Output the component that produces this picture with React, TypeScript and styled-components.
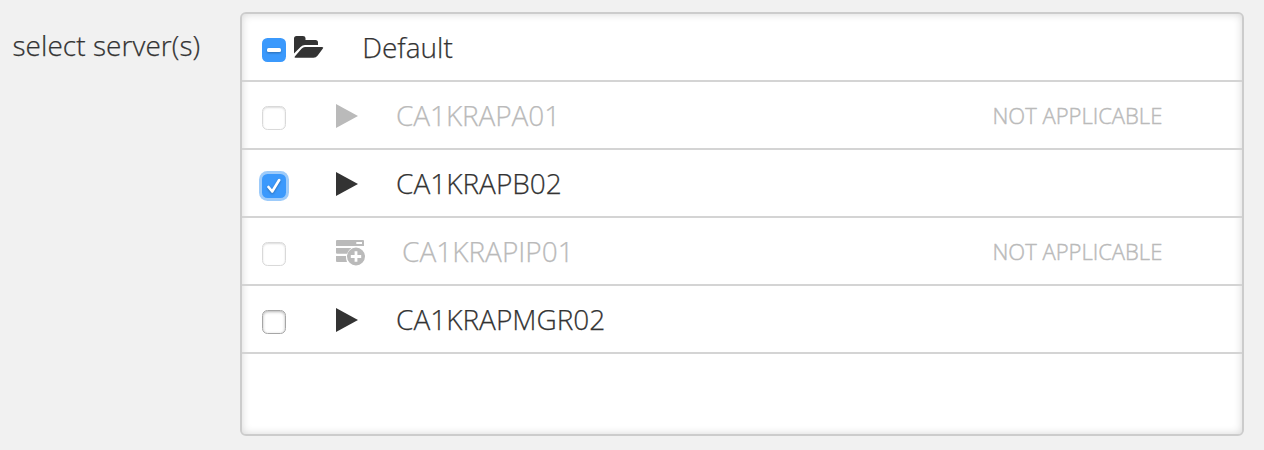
import React from 'react';
import styled, { createGlobalStyle } from 'styled-components';

const Global = createGlobalStyle`
  *{box-sizing:border-box}
  body{margin:0;background:#f1f1f1;font-family:"Open Sans",sans-serif;font-weight:300;color:#333;-webkit-text-stroke:.25px currentColor}
`;
const Page = styled.main`display:flex;height:450px;padding-top:12px;overflow:hidden;`;
const Label = styled.label`width:240px;flex:none;padding:13px 0 0 12.5px;font-size:28px;letter-spacing:.06px;line-height:40px;white-space:nowrap;`;
const List = styled.section`width:1004px;height:424px;background:#fff;border:2px solid #ccc;border-radius:6px;box-shadow:inset 0 0 9px rgba(0,0,0,.16);`;
const Row = styled.div<{ $off?: boolean }>`display:flex;align-items:center;height:68px;border-bottom:2px solid #d4d4d4;padding-left:20px;color:${p => (p.$off ? '#bababa' : '#333')};font-size:28px;`;
const Box = styled.span<{ $state?: string; $off?: boolean }>`
  width:24px;height:24px;flex:none;margin-top:5px;border-radius:5.5px;display:grid;place-items:center;
  background:${p => (p.$state ? '#3b99fc' : '#fff')};
  border:${p => (p.$state ? '0' : p.$off ? '1px solid #d9d9d9' : '1px solid #a6a6a6')};
  box-shadow:${p => (p.$state === 'on' ? '0 0 0 3px #9dcbfa' : p.$state ? 'none' : p.$off ? 'inset 0 1px 2px rgba(0,0,0,.14)' : 'inset 0 1px 3px rgba(0,0,0,.3)')};
  svg{filter:drop-shadow(0 1px 1px rgba(0,0,0,.3))}
`;
const Icon = styled.span<{ $gap: number }>`display:flex;width:32px;flex:none;margin-left:${p => p.$gap}px;`;
const Name = styled.span<{ $gap: number; $tight?: boolean }>`flex:1;margin-left:${p => p.$gap}px;line-height:40px;letter-spacing:${p => (p.$tight ? '-.1px' : '0')};`;
const Note = styled.span`width:170px;margin-right:79.5px;font-size:22px;white-space:nowrap;-webkit-text-stroke-width:.45px;`;

const Play = () => <svg width="24" height="28" viewBox="0 0 24 28"><path d="M1 3L23 15L1 27Z" fill="currentColor" /></svg>;
const Folder = () => (
  <svg width="30" height="24" viewBox="0 0 30 24"><g fill="currentColor">
    <path d="M0 18.600V3.500Q0 1 2.500 1H9Q11.300 1 11.500 3V5H21.500Q24 5 24 7.500V10H11Q8.500 10 6.500 12Z" />
    <path d="M.8 21.600L7.500 13.800Q9 12 11 12H28Q30 12 28.700 13.800L23.500 20.800Q22 22.800 19.500 22.800H1.500Q0 22.800 .8 21.600Z" />
  </g></svg>
);
const ServerAdd = () => (
  <svg width="30" height="30" viewBox="0 0 30 30"><g fill="currentColor">
    <path fillRule="evenodd" d="M1 4H27Q28 4 28 5V10H0V5Q0 4 1 4ZM20.300 6V8H26V6Z" />
    <path d="M0 12H15.500Q12.300 13.800 11 17.800H1Q0 17.800 0 16.800Z" />
    <path d="M0 20H10Q9.800 23 11 26H1Q0 26 0 25Z" />
    <path fillRule="evenodd" d="M20 11.500A9 9 0 1 1 20 29.500A9 9 0 1 1 20 11.500ZM18.600 15.300V19.100H14.800V21.900H18.600V25.700H21.400V21.900H25.200V19.100H21.400V15.300Z" />
  </g></svg>
);
const Dash = () => <svg width="14" height="4" viewBox="0 0 14 4"><rect width="14" height="4" rx="1.500" fill="#fff" /></svg>;
const Check = () => <svg width="16" height="16" viewBox="0 0 16 16"><path d="M2.500 9L6.200 13.500L13.200 2" fill="none" stroke="#fff" strokeWidth="2.600" strokeLinecap="round" strokeLinejoin="round" /></svg>;

export default function App() {
  return <><Global /><Page><Label>select server(s)</Label><List>
    <Row><Box $state="mixed"><Dash /></Box><Icon $gap={8}><Folder /></Icon><Name $gap={36.2}>Default</Name></Row>
    <Row $off><Box $off /><Icon $gap={49}><Play /></Icon><Name $gap={29} $tight>CA1KRAPA01</Name><Note>NOT APPLICABLE</Note></Row>
    <Row><Box $state="on"><Check /></Box><Icon $gap={49}><Play /></Icon><Name $gap={29}>CA1KRAPB02</Name></Row>
    <Row $off><Box $off /><Icon $gap={50}><ServerAdd /></Icon><Name $gap={34}>CA1KRAPIP01</Name><Note>NOT APPLICABLE</Note></Row>
    <Row><Box /><Icon $gap={49}><Play /></Icon><Name $gap={29}>CA1KRAPMGR02</Name></Row>
  </List></Page></>;
}
